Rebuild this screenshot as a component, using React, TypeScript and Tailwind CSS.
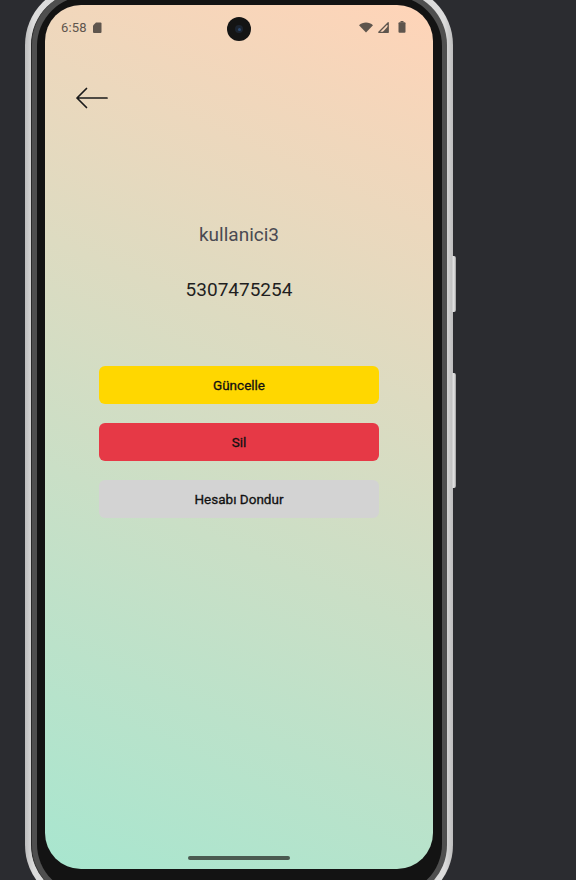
import React from "react";

function StatusBar() {
  return (
    <div className="h-[44px] flex items-center justify-between pl-[16px] pr-[27px] shrink-0">
      <div className="flex items-center gap-[6px]">
        <span className="text-[13px] leading-none text-[#5e554d] tracking-[0.2px]" style={{ fontFamily: "Roboto, 'Noto Sans', sans-serif" }}>6:58</span>
        <svg width="9" height="11" viewBox="0 0 9 11">
          <path d="M3 0.5h4.5a1 1 0 0 1 1 1v8.5a1 1 0 0 1-1 1h-6.5a1 1 0 0 1-1-1v-6.5z" fill="#5e554d" />
        </svg>
      </div>
      <div className="flex items-center gap-[3px]">
        <svg width="14" height="11" viewBox="0 0 14 11">
          <path d="M7 10.5L0 3.2C1.9 1.4 4.3 0.4 7 0.4s5.1 1 7 2.8z" fill="#5e554d" />
        </svg>
        <svg width="11" height="11" viewBox="0 0 11 11" className="ml-[2px]">
          <path d="M10.2 0.8V10.3H0.8z" fill="none" stroke="#5e554d" strokeWidth="1.3" strokeLinejoin="round" />
          <path d="M10.2 4V10.3H4.5z" fill="#5e554d" />
        </svg>
        <svg width="8" height="12" viewBox="0 0 8 12" className="ml-[6px]">
          <rect x="2.5" y="0" width="3" height="1.5" fill="#5e554d" />
          <rect x="0.5" y="1.2" width="7" height="10.6" rx="1" fill="#5e554d" />
        </svg>
      </div>
    </div>
  );
}

export default function App() {
  const roboto = { fontFamily: "Roboto, 'Noto Sans', 'Liberation Sans', sans-serif" };
  return (
    <div className="w-[576px] h-[880px] overflow-hidden bg-[#2b2c30] relative" style={roboto}>
      {/* phone frame */}
      <div className="relative ml-[25px] mt-[-15px] w-[428px] h-[920px]">
        {/* side buttons */}
        <div className="absolute left-[427px] top-[271px] w-[4px] h-[56px] rounded-r-[2px] bg-[linear-gradient(90deg,#c9c9c9,#e6e6e6,#9a9a9a)]" />
        <div className="absolute left-[427px] top-[388px] w-[4px] h-[115px] rounded-r-[2px] bg-[linear-gradient(90deg,#c9c9c9,#e6e6e6,#9a9a9a)]" />
        <div className="w-full h-full rounded-[60px] p-[6px] bg-[linear-gradient(90deg,#bdbdbd,#dcdcdc_2%,#cfcfcf_50%,#dcdcdc_98%,#bdbdbd)]">
          <div className="w-full h-full rounded-[54px] p-[5px] bg-[#4f4f4f] border-l border-[#2a2a2a]">
            <div className="w-full h-full rounded-[50px] bg-[#131313] px-[8px] pt-[9px]">
              {/* screen */}
              <div className="relative w-[388px] h-[864px] rounded-[36px] overflow-hidden bg-[linear-gradient(204deg,#ffd4b8,#a8e6cf)] flex flex-col">
                <StatusBar />
                {/* camera */}
                <div className="absolute left-[182px] top-[12px] w-[24px] h-[24px] rounded-full bg-[#141414] flex items-center justify-center">
                  <div className="w-[8px] h-[8px] rounded-full bg-[#1c2430] flex items-center justify-center">
                    <div className="w-[3px] h-[3px] rounded-full bg-[#2c4a70]" />
                  </div>
                </div>
                {/* back arrow */}
                <div className="mt-[38px] ml-[30px] w-[33px] h-[22px]">
                  <svg width="33" height="22" viewBox="0 0 33 22">
                    <path d="M32 11H2M11.5 1.5L2 11l9.5 9.5" fill="none" stroke="#1b1b1b" strokeWidth="1.7" strokeLinecap="round" strokeLinejoin="round" />
                  </svg>
                </div>
                <div className="mt-[114px] text-center text-[19px] leading-[24px] text-[#4a4a52]">kullanici3</div>
                <div className="mt-[31px] text-center text-[19px] leading-[24px] text-[#1f1f1f]">5307475254</div>
                <div className="mt-[64px] flex flex-col items-center gap-[19px]">
                  <button className="w-[280px] h-[38px] rounded-[6px] bg-[#ffd700] text-[13.5px] font-normal text-[#111] [-webkit-text-stroke:0.3px_#111]">Güncelle</button>
                  <button className="w-[280px] h-[38px] rounded-[6px] bg-[#e63946] text-[13.5px] font-normal text-[#111] [-webkit-text-stroke:0.3px_#111]">Sil</button>
                  <button className="w-[280px] h-[38px] rounded-[6px] bg-[#d3d3d3] text-[13.5px] font-normal text-[#111] [-webkit-text-stroke:0.3px_#111]">Hesabı Dondur</button>
                </div>
                {/* home indicator */}
                <div className="absolute left-[143px] bottom-[9px] w-[102px] h-[4px] rounded-full bg-[#4a5a50]" />
              </div>
            </div>
          </div>
        </div>
      </div>
    </div>
  );
}
